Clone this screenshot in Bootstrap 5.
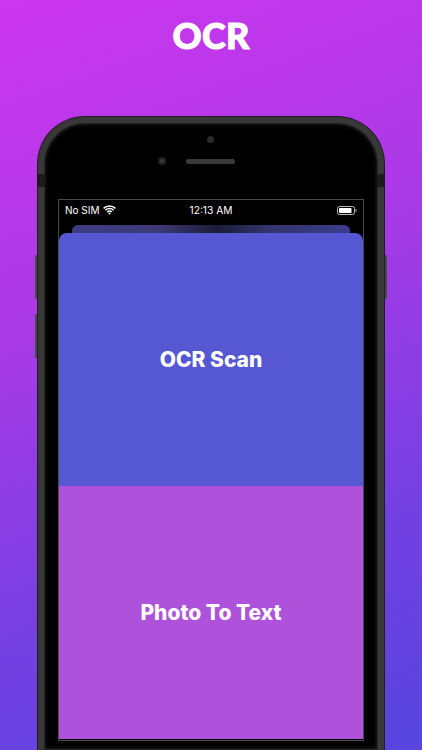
<!DOCTYPE html>
<html lang="en">
<head>
<meta charset="utf-8">
<title>OCR</title>
<link rel="stylesheet" href="https://cdn.jsdelivr.net/npm/bootstrap@5.3.0/dist/css/bootstrap.min.css">
<style>
html,body{height:750px;overflow:hidden}
body{background:linear-gradient(160deg,#cc36ee 0%,#a93ae6 38%,#7440e2 72%,#5645de 100%);font-family:Inter,"Liberation Sans",sans-serif;color:#fff}
.app-title{font-family:Lato,Inter,sans-serif;font-weight:900;font-size:36px;line-height:40px;height:40px;margin-top:15px;letter-spacing:.3px;-webkit-text-stroke:1px #fff}
.handset{position:relative;width:346px;height:633px;margin:62px 0 0 38px;background:#000;border-radius:47px 47px 0 0;border:6px solid #383838;border-bottom:0;box-shadow:inset 0 0 0 1px #262626,inset 0 0 4px 1px #222,0 0 0 1px #1e1e1e}
.side-key{position:absolute;width:2px;background:#4a4a4a;border-radius:1px}
.key-a{left:-9px;top:132px;height:44px}
.key-b{left:-9px;top:191px;height:44px}
.key-c{right:-9px;top:132px;height:44px}
.band{position:absolute;width:8px;height:13px;background:#1b1b1b;top:51px}
.band-l{left:-7px}.band-r{right:-7px}
.bezel-top{height:76px;position:relative}
.lens{position:absolute;top:13px;left:163px;width:7px;height:7px;border-radius:50%;background:#2b2b2b}
.sensor{position:absolute;top:34px;left:114px;width:8px;height:8px;border-radius:50%;background:#3a3a3a;box-shadow:inset 0 0 0 2px #1d1d1d}
.speaker{position:absolute;top:36px;left:142px;width:49px;height:5px;border-radius:3px;background:#3a3a3a}
.display{width:306px;margin-left:14px;height:542px;background:#000;border:1px solid #4a4a4a}
.status-line{height:25px;padding:0 6px 5px;font-size:10px;line-height:1}
.status-left,.status-right{width:100px}
.clock{font-size:10.2px}
.peek{height:8px;margin:0 13px;border-radius:6px 6px 0 0;background:linear-gradient(90deg,#3d3d85 0%,#3e3a78 30%,#1c1c3a 52%,#33356f 72%,#3a3c8c 100%)}
.pane{flex:1 1 0;font-weight:800;font-size:21px}
.pane-blue{background:#5558d2;border-radius:8px 8px 0 0}
.pane-violet{background:#ae52dc}
.stack{height:506px}
</style>
</head>
<body>
<div class="app-title text-center">OCR</div>
<div class="handset">
  <span class="side-key key-a"></span><span class="side-key key-b"></span><span class="side-key key-c"></span>
  <span class="band band-l"></span><span class="band band-r"></span>
  <div class="bezel-top">
    <span class="lens"></span><span class="sensor"></span><span class="speaker"></span>
  </div>
  <div class="display">
    <div class="status-line d-flex align-items-center justify-content-between">
      <div class="status-left d-flex align-items-center gap-1">
        <span>No SIM</span>
        <svg width="13" height="10" viewBox="0 0 13 10" aria-hidden="true"><path d="M.6 3.4a8.4 8.4 0 0 1 11.8 0M2.4 5.3a5.8 5.8 0 0 1 8.2 0M4.2 7.1a3.2 3.2 0 0 1 4.6 0" fill="none" stroke="#fff" stroke-width="1.5"/><path d="M5.2 8.2a1.9 1.9 0 0 1 2.6 0L6.5 9.8z" fill="#fff"/></svg>
      </div>
      <span class="clock">12:13 AM</span>
      <div class="status-right d-flex justify-content-end">
        <svg width="20" height="9" viewBox="0 0 20 9" aria-hidden="true"><rect x=".5" y=".5" width="17" height="8" rx="2" fill="none" stroke="#bbb"/><rect x="2" y="2" width="12.5" height="5" rx=".8" fill="#fff"/><rect x="18.5" y="3" width="1" height="3" fill="#999"/></svg>
      </div>
    </div>
    <div class="peek"></div>
    <div class="stack d-flex flex-column">
      <div class="pane pane-blue d-flex align-items-center justify-content-center">OCR Scan</div>
      <div class="pane pane-violet d-flex align-items-center justify-content-center">Photo To Text</div>
    </div>
  </div>
</div>
<script src="https://cdn.jsdelivr.net/npm/bootstrap@5.3.0/dist/js/bootstrap.bundle.min.js"></script>
</body>
</html>
